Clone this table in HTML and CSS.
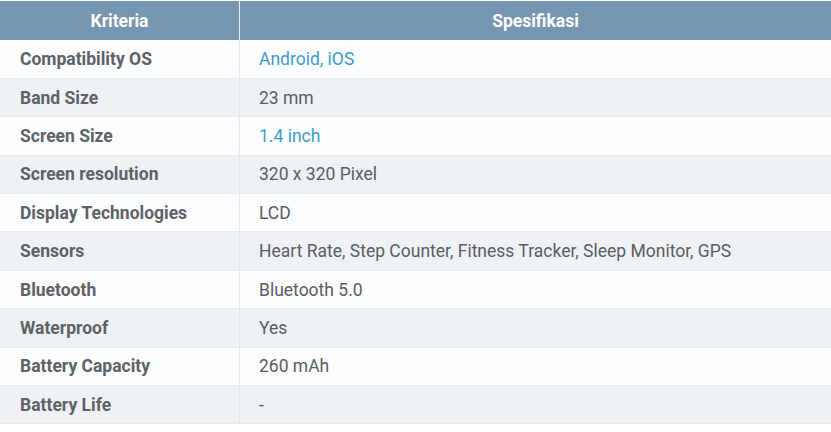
FILE: index.html
```html
<!DOCTYPE html>
<html>
<head>
<meta charset="utf-8">
<link rel="stylesheet" href="styles.css">
</head>
<body>
<table class="spec">
  <thead>
    <tr><th class="c1">Kriteria</th><th class="c2">Spesifikasi</th></tr>
  </thead>
  <tbody>
    <tr><td class="k">Compatibility OS</td><td class="v"><a class="lnk">Android, iOS</a></td></tr>
    <tr><td class="k">Band Size</td><td class="v">23 mm</td></tr>
    <tr><td class="k">Screen Size</td><td class="v"><a class="lnk">1.4 inch</a></td></tr>
    <tr><td class="k">Screen resolution</td><td class="v">320 x 320 Pixel</td></tr>
    <tr><td class="k">Display Technologies</td><td class="v">LCD</td></tr>
    <tr><td class="k">Sensors</td><td class="v">Heart Rate, Step Counter, Fitness Tracker, Sleep Monitor, GPS</td></tr>
    <tr><td class="k">Bluetooth</td><td class="v">Bluetooth 5.0</td></tr>
    <tr><td class="k">Waterproof</td><td class="v">Yes</td></tr>
    <tr><td class="k">Battery Capacity</td><td class="v">260 mAh</td></tr>
    <tr><td class="k">Battery Life</td><td class="v">-</td></tr>
  </tbody>
</table>
</body>
</html>
```
FILE: styles.css
```css
html, body { margin: 0; padding: 0; background: #ffffff; }
body { padding-top: 1px; font-family: Roboto, "Liberation Sans", sans-serif; }
.spec {
  width: 831px;
  border-collapse: collapse;
  table-layout: fixed;
  font-size: 17.5px;
}
.spec th {
  background: #7695b1;
  color: #ffffff;
  font-weight: 700;
  height: 39px;
  padding: 0;
  text-align: center;
  border-left: 1px solid #e9eef3;
}
.spec th.c1 { width: 239px; border-left: none; }
.spec td {
  height: 38.4px;
  padding: 0 0 0 20px;
  color: #555a60;
  border-bottom: 1px solid #e6eaef;
  vertical-align: middle;
  box-sizing: border-box;
}
.spec td.k { font-weight: 700; color: #5e6166; }
.spec td.v { border-left: 1px solid #e4e8ec; color: #5a5d62; padding-left: 19px; }
.spec tbody tr:nth-child(odd) td { background: #fcfdff; }
.spec tbody tr:nth-child(even) td { background: #eef2f7; }
.lnk { color: #3d9ccb; text-decoration: none; }
```
